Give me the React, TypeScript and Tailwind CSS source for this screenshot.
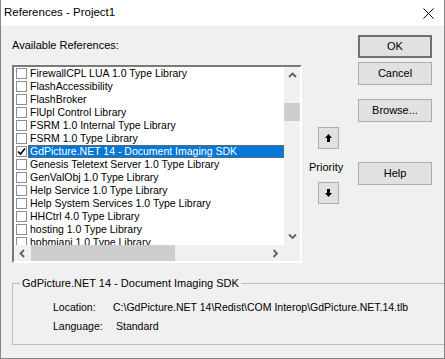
const refs = [
  'FirewallCPL LUA 1.0 Type Library',
  'FlashAccessibility',
  'FlashBroker',
  'FlUpl Control Library',
  'FSRM 1.0 Internal Type Library',
  'FSRM 1.0 Type Library',
  'GdPicture.NET 14 - Document Imaging SDK',
  'Genesis Teletext Server 1.0 Type Library',
  'GenValObj 1.0 Type Library',
  'Help Service 1.0 Type Library',
  'Help System Services 1.0 Type Library',
  'HHCtrl 4.0 Type Library',
  'hosting 1.0 Type Library',
  'hpbmiani 1.0 Type Library',
];

function Chevron({ dir }: { dir: 'up' | 'down' | 'left' | 'right' }) {
  const d = {
    up: 'M1 5 L4.5 1.5 L8 5',
    down: 'M1 1.5 L4.5 5 L8 1.5',
    left: 'M5 1 L1.5 4.5 L5 8',
    right: 'M1.5 1 L5 4.5 L1.5 8',
  }[dir];
  const w = dir === 'up' || dir === 'down' ? 9 : 7;
  const h = dir === 'up' || dir === 'down' ? 7 : 9;
  return (
    <svg width={w} height={h} viewBox={`0 0 ${w} ${h}`}>
      <path d={d} fill="none" stroke="#606060" strokeWidth="1.8" />
    </svg>
  );
}

function Button({ label, isDefault }: { label: string; isDefault?: boolean }) {
  return (
    <div
      className={
        'h-[23px] w-[74px] bg-[#e1e1e1] flex items-center justify-center text-[11px] ' +
        (isDefault ? 'border-2 border-[#707070]' : 'border border-[#adadad]')
      }
    >
      {label}
    </div>
  );
}

function ArrowButton({ up }: { up?: boolean }) {
  return (
    <div className="h-[22px] w-[21px] bg-[#e1e1e1] border border-[#adadad] flex items-center justify-center">
      <svg width="7" height="8" viewBox="0 0 7 8">
        {up ? (
          <path d="M3.5 0 L7 4 L5 4 L5 8 L2 8 L2 4 L0 4 Z" fill="#000" />
        ) : (
          <path d="M3.5 8 L7 4 L5 4 L5 0 L2 0 L2 4 L0 4 Z" fill="#000" />
        )}
      </svg>
    </div>
  );
}

export default function App() {
  return (
    <div className="w-[445px] h-[359px] bg-[#f0f0f0] flex flex-col border-x border-b border-[#858585] font-['Liberation_Sans',Arial,sans-serif] text-[10.5px] text-black overflow-hidden">
      {/* title bar */}
      <div className="h-[26px] bg-white flex items-center pl-[3px] pr-[10px] shrink-0">
        <span className="text-[11.5px] flex-1">References - Project1</span>
        <svg width="11" height="11" viewBox="0 0 11 11">
          <path d="M0.5 0.5 L10.5 10.5 M10.5 0.5 L0.5 10.5" stroke="#000" strokeWidth="1" />
        </svg>
      </div>

      <div className="flex flex-col px-[11px]">
        <div className="flex">
          {/* list column */}
          <div className="w-[290px] flex flex-col pt-[13px]">
            <div className="h-[13px] leading-[13px] text-[11px]">Available References:</div>
            <div className="mt-[13px] h-[198px] border-2 border-t-[#7a7a7a] border-l-[#7a7a7a] border-b-white border-r-white bg-white flex flex-col">
              <div className="flex h-[178px]">
                <div className="flex-1 overflow-hidden flex flex-col">
                  {refs.map((r, i) => {
                    const sel = i === 6;
                    return (
                      <div key={r} className="h-[13px] flex items-center pl-[2px] shrink-0">
                        <div className="w-[11px] h-[11px] border border-[#8f8f8f] bg-white flex items-center justify-center shrink-0">
                          {sel && (
                            <svg width="9" height="9" viewBox="0 0 9 9">
                              <path d="M1 4.5 L3.5 7 L8 1.5" fill="none" stroke="#000" strokeWidth="1.6" />
                            </svg>
                          )}
                        </div>
                        <div
                          className={
                            'ml-[1px] h-[13px] leading-[11px] px-[1px] whitespace-nowrap ' +
                            (sel
                              ? 'flex-1 bg-[#0078d7] text-white border border-dotted border-[#b05a00]'
                              : 'border border-transparent')
                          }
                        >
                          {r}
                        </div>
                      </div>
                    );
                  })}
                </div>
                {/* vertical scrollbar */}
                <div className="w-[16px] bg-[#f0f0f0] flex flex-col">
                  <div className="h-[17px] flex items-center justify-center">
                    <Chevron dir="up" />
                  </div>
                  <div className="flex-1 flex flex-col">
                    <div className="mt-[19px] h-[18px] bg-[#cdcdcd]" />
                  </div>
                  <div className="h-[17px] flex items-center justify-center">
                    <Chevron dir="down" />
                  </div>
                </div>
              </div>
              {/* horizontal scrollbar */}
              <div className="flex h-[16px]">
                <div className="flex-1 bg-[#f0f0f0] flex items-center">
                  <div className="w-[17px] flex justify-center">
                    <Chevron dir="left" />
                  </div>
                  <div className="w-[144px] h-[16px] bg-[#cdcdcd]" />
                  <div className="flex-1" />
                  <div className="w-[17px] flex justify-center">
                    <Chevron dir="right" />
                  </div>
                </div>
                <div className="w-[16px] bg-[#f0f0f0]" />
              </div>
            </div>
          </div>

          {/* priority column */}
          <div className="ml-[7px] w-[34px] flex flex-col pt-[101px]">
            <div className="ml-[9px]">
              <ArrowButton up />
            </div>
            <div className="mt-[12px] h-[13px] leading-[13px] text-center text-[11px]">Priority</div>
            <div className="mt-[8px] ml-[9px]">
              <ArrowButton />
            </div>
          </div>

          {/* buttons column */}
          <div className="ml-[15px] flex flex-col pt-[9px]">
            <Button label="OK" isDefault />
            <div className="mt-[4px]">
              <Button label="Cancel" />
            </div>
            <div className="mt-[14px]">
              <Button label="Browse..." />
            </div>
            <div className="mt-[40px]">
              <Button label="Help" />
            </div>
          </div>
        </div>

        {/* group box */}
        <fieldset className="mt-[14px] w-[421px] h-[68px] border border-[#bdbdbd] px-[40px]">
          <legend className="ml-[-33px] px-[2px] leading-[13px] text-[11px]">GdPicture.NET 14 - Document Imaging SDK</legend>
          <div className="pt-[8px] flex flex-col">
            <div className="h-[19px] flex items-center">
              <span className="w-[60px]">Location:</span>
              <span className="w-[300px] overflow-hidden whitespace-nowrap">
                C:\GdPicture.NET 14\Redist\COM Interop\GdPicture.NET.14.tlb
              </span>
            </div>
            <div className="h-[19px] flex items-center">
              <span className="w-[60px]">Language:</span>
              <span className="ml-[3px]">Standard</span>
            </div>
          </div>
        </fieldset>
      </div>
    </div>
  );
}
